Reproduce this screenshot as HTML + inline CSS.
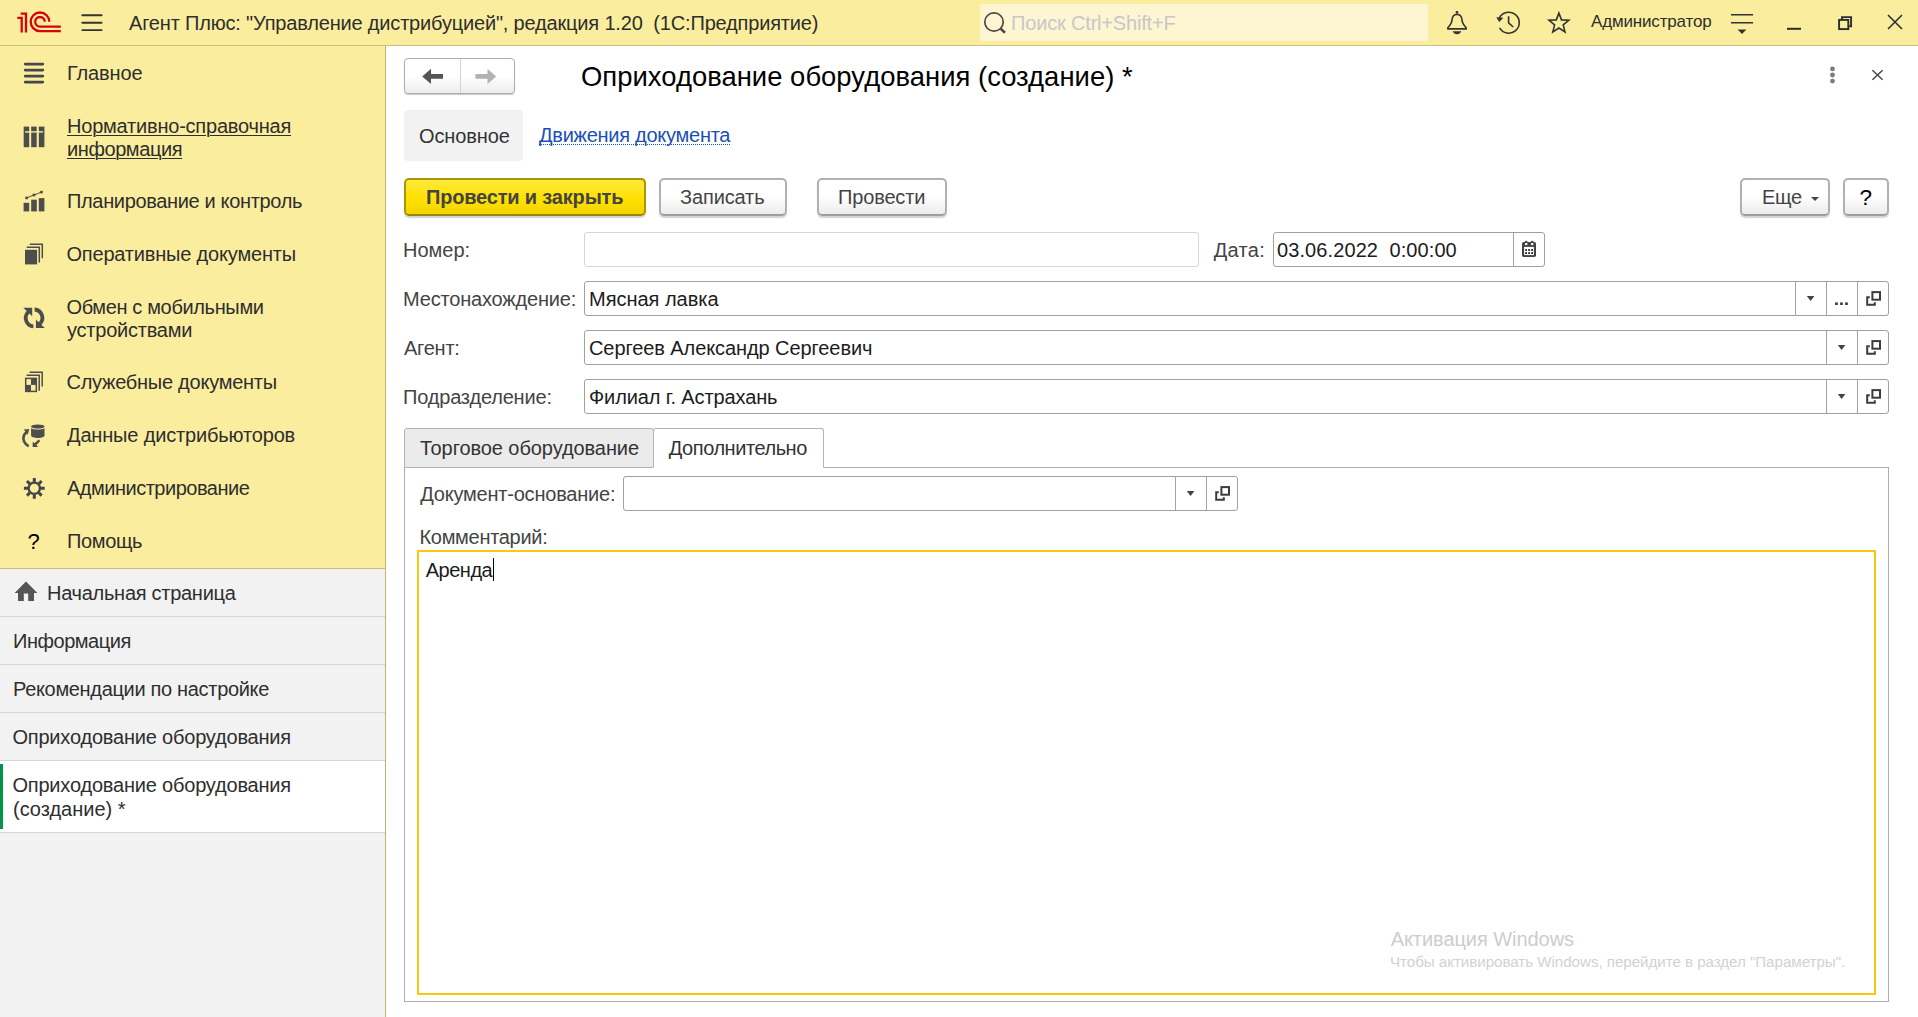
<!DOCTYPE html>
<html lang="ru">
<head>
<meta charset="utf-8">
<title>Оприходование оборудования (создание) *</title>
<style>
*{box-sizing:border-box;margin:0;padding:0}
html,body{width:1918px;height:1017px;overflow:hidden;background:#fff}
body{font-family:"Liberation Sans",sans-serif;font-size:20px;color:#333;position:relative}
.t{position:absolute;white-space:pre;line-height:24px;height:24px}
svg{position:absolute;overflow:visible}

/* ---------- top bar ---------- */
#topbar{position:absolute;left:0;top:0;width:1918px;height:46px;background:#fbed9e;border-bottom:1px solid #cbbf79}
#apptitle{left:129px;top:11px;font-size:20px;color:#2e2e2e}
#search{position:absolute;left:980px;top:4px;width:448px;height:37px;background:#fef6d3;border-radius:3px}
#srch{left:1013px;top:11px;font-size:20px;color:#c7c7c7}
#user{left:1591px;top:10px;font-size:17px;color:#2e2e2e}

/* ---------- sidebar ---------- */
#sections{position:absolute;left:0;top:46px;width:385px;height:522px;background:#fbed9e}
#sideborder{position:absolute;left:385px;top:46px;width:1px;height:971px;background:#c0b366}
#sectsep{position:absolute;left:0;top:568px;width:385px;height:1px;background:#cbbf79}
#opened{position:absolute;left:0;top:569px;width:385px;height:448px;background:#f2f2f2}
.sec{left:67px;font-size:20px;line-height:23px;height:23px;color:#2e2e2e}
.sec.u{text-decoration:underline;text-decoration-thickness:1px;text-underline-offset:2px}
.row{position:absolute;left:0;width:385px;height:48px;border-bottom:1px solid #d6d6d6}
.row.active{background:#fff;height:72px}
.row.active:before{content:"";position:absolute;left:0;top:3px;width:3px;height:65px;background:#009646}
.rt{left:13px;font-size:20px;color:#2e2e2e}

/* ---------- content ---------- */
#doctitle{left:581px;top:62px;font-size:27.4px;line-height:30px;height:30px;color:#000}
#navbtn{position:absolute;left:404px;top:58px;width:111px;height:36px;border:1px solid #adadad;border-radius:4px;background:linear-gradient(#ffffff,#ffffff 50%,#ededed);box-shadow:0 1px 1px rgba(0,0,0,.22)}
#navbtn i{position:absolute;left:55px;top:0;width:1px;height:34px;background:#d4d4d4}
#tabmain{position:absolute;left:404px;top:110px;width:119px;height:51px;background:#f2f2f2;border-radius:4px}
#tmain{left:419px;top:124px}
#tablink{left:539px;top:124px;color:#1850b8;border-bottom:1px dotted #1b55c0;line-height:22px;height:21px}

.btn{position:absolute;top:178px;height:38px;border:2px solid #b1b1b1;border-bottom-color:#9e9e9e;border-radius:5px;background:linear-gradient(#ffffff,#ffffff 45%,#ececec);box-shadow:0 2px 1px rgba(0,0,0,.17)}
.btn.def{border:2px solid #ab9500;border-bottom-color:#9c8700;background:linear-gradient(#ffe93b,#ffe100 55%,#f2d500)}
.bt{top:185px;color:#444}
#b1{font-weight:700;color:#444}

.lbl{color:#444}
.inp{position:absolute;height:35px;border:1px solid #a0a0a0;border-radius:3px;background:#fff}
.inp.dis{border-color:#d6d6d6}
.inp .d{position:absolute;top:0;width:1px;height:33px;background:#a3a3a3}
.val{color:#1c1c1c}

/* ---------- pages ---------- */
#panel{position:absolute;left:404px;top:467px;width:1485px;height:535px;border:1px solid #adadad;background:#fff}
.ptab{position:absolute;top:428px;height:40px;border:1px solid #b3b3b3;border-radius:3px 3px 0 0}
.ptab.off{background:#ebebeb}
.ptab.on{background:#fff;border-bottom-color:#fff}
.pt{top:436px;color:#333}
#memo{position:absolute;left:417px;top:550px;width:1459px;height:445px;border:2px solid #f9c70f;background:#fff}
#caret{position:absolute;left:493px;top:558px;width:1px;height:23px;background:#000}
.wm{position:absolute;white-space:nowrap;color:#c3c3c3}
/*LS-START*/
#apptitle{margin-left:0.00px;letter-spacing:-0.177px}
#srch{margin-left:-1.92px;letter-spacing:-0.180px}
#user{margin-left:0.00px;letter-spacing:-0.165px}
#s1{margin-left:0.00px;letter-spacing:-0.150px}
#s2a{margin-left:0.00px;letter-spacing:-0.212px}
#s2b{margin-left:0.00px;letter-spacing:-0.410px}
#s3{margin-left:0.00px;letter-spacing:-0.344px}
#s4{margin-left:-0.56px;letter-spacing:-0.184px}
#s5a{margin-left:-0.56px;letter-spacing:-0.355px}
#s5b{margin-left:0.00px;letter-spacing:-0.229px}
#s6{margin-left:-0.56px;letter-spacing:-0.250px}
#s7{margin-left:0.00px;letter-spacing:-0.162px}
#s8{margin-left:0.00px;letter-spacing:-0.495px}
#s9{margin-left:0.00px;letter-spacing:-0.360px}
#r1{margin-left:0.00px;letter-spacing:-0.275px}
#r2{margin-left:0.00px;letter-spacing:-0.460px}
#r3{margin-left:0.00px;letter-spacing:-0.323px}
#r4{margin-left:-0.56px;letter-spacing:-0.198px}
#r5a{margin-left:-0.56px;letter-spacing:-0.198px}
#r5b{margin-left:0.00px;letter-spacing:-0.016px}
#doctitle{margin-left:0.00px;letter-spacing:0.033px}
#tmain{margin-left:0.00px;letter-spacing:-0.096px}
#tablink{margin-left:0.00px;letter-spacing:-0.265px}
#b1{margin-left:0.00px;letter-spacing:-0.180px}
#b2{margin-left:0.00px;letter-spacing:-0.129px}
#b3{margin-left:0.00px;letter-spacing:-0.154px}
#b4{margin-left:0.00px;letter-spacing:-0.315px}
#l1{margin-left:0.00px;letter-spacing:0.000px}
#l2{margin-left:0.64px;letter-spacing:0.360px}
#l3{margin-left:0.00px;letter-spacing:-0.180px}
#l4{margin-left:1.04px;letter-spacing:-0.252px}
#l5{margin-left:0.00px;letter-spacing:-0.180px}
#v1{margin-left:0.00px;letter-spacing:0.100px}
#v2{margin-left:0.00px;letter-spacing:-0.016px}
#v3{margin-left:0.00px;letter-spacing:-0.083px}
#v4{margin-left:0.00px;letter-spacing:-0.120px}
#p1{margin-left:0.00px;letter-spacing:-0.081px}
#p2{margin-left:0.80px;letter-spacing:-0.450px}
#l6{margin-left:1.28px;letter-spacing:-0.215px}
#l7{margin-left:0.48px;letter-spacing:-0.295px}
#v5{margin-left:0.64px;letter-spacing:-0.468px}
#w1{margin-left:0.64px;letter-spacing:-0.056px}
#w2{margin-left:0.00px;letter-spacing:-0.062px}
/*LS-END*/
</style>
</head>
<body>

<!-- TOP BAR -->
<div id="topbar"></div>
<div id="apptitle" class="t">Агент Плюс: "Управление дистрибуцией", редакция 1.20  (1С:Предприятие)</div>
<div id="search"></div>
<div id="srch" class="t">Поиск Ctrl+Shift+F</div>
<div id="user" class="t">Администратор</div>

<!-- SIDEBAR -->
<div id="sections"></div>
<div id="sectsep"></div>
<div id="opened"></div>
<div id="sideborder"></div>

<div id="s1" class="t sec" style="top:62px">Главное</div>
<div id="s2a" class="t sec u" style="top:115px">Нормативно-справочная</div>
<div id="s2b" class="t sec u" style="top:138px">информация</div>
<div id="s3" class="t sec" style="top:190px">Планирование и контроль</div>
<div id="s4" class="t sec" style="top:243px">Оперативные документы</div>
<div id="s5a" class="t sec" style="top:296px">Обмен с мобильными</div>
<div id="s5b" class="t sec" style="top:319px">устройствами</div>
<div id="s6" class="t sec" style="top:371px">Служебные документы</div>
<div id="s7" class="t sec" style="top:424px">Данные дистрибьюторов</div>
<div id="s8" class="t sec" style="top:477px">Администрирование</div>
<div id="s9" class="t sec" style="top:530px">Помощь</div>
<div id="sq" class="t" style="left:27.6px;top:530px;font-size:22px;color:#000">?</div>

<div class="row" style="top:569px"></div>
<div class="row" style="top:617px"></div>
<div class="row" style="top:665px"></div>
<div class="row" style="top:713px"></div>
<div class="row active" style="top:761px"></div>
<div id="r1" class="t rt" style="left:47px;top:581px">Начальная страница</div>
<div id="r2" class="t rt" style="top:629px">Информация</div>
<div id="r3" class="t rt" style="top:677px">Рекомендации по настройке</div>
<div id="r4" class="t rt" style="top:725px">Оприходование оборудования</div>
<div id="r5a" class="t rt" style="top:773px">Оприходование оборудования</div>
<div id="r5b" class="t rt" style="top:797px">(создание) *</div>

<!-- CONTENT HEADER -->
<div id="navbtn"><i></i></div>
<div id="doctitle" class="t">Оприходование оборудования (создание) *</div>
<div id="tabmain"></div>
<div id="tmain" class="t">Основное</div>
<div id="tablink" class="t">Движения документа</div>

<!-- COMMAND BAR -->
<div class="btn def" style="left:404px;width:242px"></div>
<div class="btn" style="left:659px;width:128px"></div>
<div class="btn" style="left:817px;width:130px"></div>
<div class="btn" style="left:1740px;width:90px"></div>
<div class="btn" style="left:1843px;width:46px"></div>
<div id="b1" class="t bt" style="left:426px">Провести и закрыть</div>
<div id="b2" class="t bt" style="left:680px">Записать</div>
<div id="b3" class="t bt" style="left:838px">Провести</div>
<div id="b4" class="t bt" style="left:1762px">Еще</div>
<div id="b5" class="t bt" style="left:1859.6px;top:185.6px;font-size:22.5px;color:#000">?</div>

<!-- FIELDS -->
<div id="l1" class="t lbl" style="left:403px;top:238px">Номер:</div>
<div class="inp dis" style="left:584px;top:232px;width:615px"></div>
<div id="l2" class="t lbl" style="left:1213px;top:238px">Дата:</div>
<div class="inp" style="left:1273px;top:232px;width:272px"><div class="d" style="left:239px"></div></div>
<div id="v1" class="t val" style="left:1277px;top:238px">03.06.2022  0:00:00</div>

<div id="l3" class="t lbl" style="left:403px;top:287px">Местонахождение:</div>
<div class="inp" style="left:584px;top:281px;width:1305px"><div class="d" style="left:1210px"></div><div class="d" style="left:1241px"></div><div class="d" style="left:1272px"></div></div>
<div id="v2" class="t val" style="left:589px;top:287px">Мясная лавка</div>

<div id="l4" class="t lbl" style="left:403px;top:336px">Агент:</div>
<div class="inp" style="left:584px;top:330px;width:1305px"><div class="d" style="left:1241px"></div><div class="d" style="left:1272px"></div></div>
<div id="v3" class="t val" style="left:589px;top:336px">Сергеев Александр Сергеевич</div>

<div id="l5" class="t lbl" style="left:403px;top:385px">Подразделение:</div>
<div class="inp" style="left:584px;top:379px;width:1305px"><div class="d" style="left:1241px"></div><div class="d" style="left:1272px"></div></div>
<div id="v4" class="t val" style="left:589px;top:385px">Филиал г. Астрахань</div>

<!-- PAGES -->
<div id="panel"></div>
<div class="ptab off" style="left:404px;width:250px"></div>
<div class="ptab on" style="left:653px;width:171px"></div>
<div id="p1" class="t pt" style="left:420px">Торговое оборудование</div>
<div id="p2" class="t pt" style="left:668px">Дополнительно</div>

<div id="l6" class="t lbl" style="left:419px;top:482px">Документ-основание:</div>
<div class="inp" style="left:623px;top:476px;width:615px"><div class="d" style="left:551px"></div><div class="d" style="left:582px"></div></div>
<div id="l7" class="t lbl" style="left:419px;top:525px">Комментарий:</div>
<div id="memo"></div>
<div id="v5" class="t val" style="left:425px;top:558px">Аренда</div>
<div id="caret"></div>

<div id="w1" class="wm" style="left:1390px;top:927px;font-size:20px;line-height:24px;color:#cdcdcd">Активация Windows</div>
<div id="w2" class="wm" style="left:1390px;top:952px;font-size:15.2px;line-height:20px;color:#d2d2d2">Чтобы активировать Windows, перейдите в раздел "Параметры".</div>

<!-- ICON OVERLAY (page coordinates) -->
<svg id="icons" width="1918" height="1017" viewBox="0 0 1918 1017" style="left:0;top:0;pointer-events:none">
<!-- 1C logo -->
<g fill="none" stroke="#d8000f" stroke-width="2.3">
<path d="M17.3 17.9H21.7V32.4"/>
<path d="M20.7 13.7H26V32.4"/>
<path d="M49.3 21.8A9.3 9.3 0 1 0 40 31.1H60.8"/>
<path d="M44.8 21.8A4.8 4.8 0 1 0 40 26.6H60.8"/>
</g>
<!-- hamburger -->
<g stroke="#333" stroke-width="1.9" stroke-linecap="round"><path d="M82.3 15.2H101.6M82.3 22.7H101.6M82.3 30.1H101.6"/></g>
<!-- search -->
<g fill="none" stroke="#4a4a44" stroke-width="1.7"><circle cx="994" cy="22" r="9.2"/><path d="M1000.6 28.6L1005 32.8" stroke-width="2.6"/></g>
<!-- bell -->
<path d="M1457 14.5C1454 14.5 1452.3 16.6 1452.1 19.5C1451.9 23 1450.6 24.8 1447.8 27.8V28.9H1466.2V27.8C1463.4 24.8 1462.1 23 1461.9 19.5C1461.7 16.6 1460 14.5 1457 14.5Z" fill="none" stroke="#333" stroke-width="1.6" stroke-linejoin="round"/>
<circle cx="1457" cy="12.4" r="1.4" fill="#333"/>
<path d="M1452.7 31.2H1461.3C1460.5 33.2 1459 34.2 1457 34.2C1455 34.2 1453.5 33.2 1452.7 31.2Z" fill="#333"/>
<!-- history -->
<g fill="none" stroke="#333" stroke-width="1.6">
<path d="M1499.3 18.1A10.5 10.5 0 1 1 1499.6 27.9"/>
<path d="M1508.6 16.2V22.8L1513.2 27"/>
</g>
<path d="M1496.2 17.3L1503.4 17.7L1499.3 22Z" fill="#333"/>
<!-- star -->
<path d="M1558.9 13.1 L1561.5 19.9 L1568.8 20.3 L1563.2 24.9 L1565.0 31.9 L1558.9 28.0 L1552.8 31.9 L1554.6 24.9 L1549.0 20.3 L1556.3 19.9Z" fill="none" stroke="#333" stroke-width="1.6" stroke-linejoin="miter"/>
<!-- filter menu -->
<g stroke="#333" stroke-width="1.6"><path d="M1731 14.8H1753M1731 22.8H1753"/></g>
<path d="M1737.6 29.4H1746.4L1742 34Z" fill="#333"/>
<!-- window controls -->
<path d="M1787 28.8H1801" stroke="#2b2b33" stroke-width="2"/>
<g fill="none" stroke="#2b2b33" stroke-width="1.9"><path d="M1842 19V17.1H1851.1V26.2H1849.2"/><rect x="1839.1" y="19.9" width="9.2" height="9.2"/></g>
<path d="M1888 15L1902 29M1902 15L1888 29" stroke="#2b2b33" stroke-width="1.5"/>

<!-- form close / more -->
<g fill="#7b7b7b"><circle cx="1832.5" cy="68.9" r="2.4"/><circle cx="1832.5" cy="75" r="2.4"/><circle cx="1832.5" cy="81.1" r="2.4"/></g>
<path d="M1872.4 70.2L1882.6 79.8M1882.6 70.2L1872.4 79.8" stroke="#484848" stroke-width="1.5"/>

<!-- nav arrows -->
<path d="M422.2 76.4L431 68.7V74H443V78.8H431V84.1Z" fill="#555"/>
<path d="M496.2 76.4L487.5 68.7V74H475.4V78.8H487.5V84.1Z" fill="#b2b2b2"/>

<!-- SIDEBAR ICONS -->
<g stroke="#45474c" stroke-width="2.8" stroke-linecap="round"><path d="M25.2 64.1H42.8M25.2 70.1H42.8M25.2 76.1H42.8M25.2 82.1H42.8"/></g>
<g fill="#4d4d4d">
<rect x="23.7" y="126.6" width="5.5" height="20.6"/><rect x="31.2" y="126.6" width="5.5" height="20.6"/><rect x="38.8" y="126.6" width="5.6" height="20.6"/>
</g>
<rect x="25" y="131.2" width="18" height="1.4" fill="#fbed9e"/>
<!-- planning -->
<g fill="#4d4d4d">
<rect x="23.6" y="202.8" width="5.6" height="8.6"/><rect x="31.2" y="199.7" width="5.6" height="11.7"/><rect x="38.8" y="198.1" width="5.6" height="13.3"/>
<rect x="25.3" y="196.6" width="2.6" height="2.6"/><rect x="32.7" y="193.7" width="2.6" height="2.6"/><rect x="40.2" y="190.8" width="2.6" height="2.6"/>
</g>
<path d="M26.6 197.9L34 195L41.5 192.1" stroke="#4d4d4d" stroke-width="1" fill="none"/>
<!-- operative docs -->
<rect x="25" y="249.8" width="12.1" height="14.6" fill="#4d4d4d"/>
<g fill="none" stroke="#4d4d4d" stroke-width="1.5"><path d="M26.8 247.2H39.3V262.6"/><path d="M29.8 244.2H42.3V258.2"/></g>
<!-- exchange -->
<g fill="#4d4d4d">
<path d="M23.35 307.8H32.2V316.2L29.4 313.5A6.5 6.5 0 0 0 33.4 324.4V328.2A10.3 10.3 0 0 1 26.6 310.9Z"/>
<path d="M44.75 328H35.9V319.6L38.7 322.3A6.5 6.5 0 0 0 34.6 311.4V307.6A10.3 10.3 0 0 1 41.5 324.9Z"/>
</g>
<!-- service docs -->
<g fill="none" stroke="#4d4d4d" stroke-width="1.5"><path d="M26.6 375.3H39.2V390.8"/><path d="M29.6 372.3H42.2V386.6"/><rect x="25.7" y="378.4" width="10.6" height="13"/></g>
<g fill="#4d4d4d"><rect x="31" y="378.4" width="5.3" height="6.5"/><rect x="25.7" y="384.9" width="5.3" height="6.5"/></g>
<!-- distributors data -->
<g fill="#4d4d4d">
<ellipse cx="37.8" cy="426.5" rx="6.8" ry="1.95"/>
<path d="M31.1 427.4C31.1 430.3 44.5 430.3 44.5 427.4V435.4C44.5 438.7 31.1 438.7 31.1 435.4Z"/>
<path d="M32.6 446.9L32.8 441.6L34.6 443.3L38.6 439.4L40.3 441.1L36.4 445L38.2 446.9Z"/>
<path d="M23.8 429.4L29.3 429.1L27.7 434.7Z"/>
</g>
<path d="M26.4 432.2C23.6 434.7 22.9 438.6 24.1 441.6C25 443.8 26.5 445.3 28.7 446.2" fill="none" stroke="#4d4d4d" stroke-width="2.6"/>
<!-- gear -->
<circle cx="34.3" cy="488.3" r="5.65" fill="none" stroke="#43454b" stroke-width="2.3"/>
<path d="M40.60 488.30L44.70 488.30M38.75 492.75L41.65 495.65M34.30 494.60L34.30 498.70M29.85 492.75L26.95 495.65M28.00 488.30L23.90 488.30M29.85 483.85L26.95 480.95M34.30 482.00L34.30 477.90M38.75 483.85L41.65 480.95" stroke="#43454b" stroke-width="3" fill="none"/>
<!-- home -->
<path d="M26 581.6L37.4 593H34V601H28.2V593.4H23.8V601H18V593H14.6Z" fill="#555"/>

<!-- FIELD ICONS -->
<g fill="none" stroke="#3c3c3c" stroke-width="2"><rect x="1872.4" y="292.1" width="7.6" height="7.6"/><path d="M1869.8 297.3H1867.2V304.7H1874.8V302.3"/></g>
<g fill="none" stroke="#3c3c3c" stroke-width="2"><rect x="1872.4" y="341.1" width="7.6" height="7.6"/><path d="M1869.8 346.3H1867.2V353.7H1874.8V351.3"/></g>
<g fill="none" stroke="#3c3c3c" stroke-width="2"><rect x="1872.4" y="390.1" width="7.6" height="7.6"/><path d="M1869.8 395.3H1867.2V402.7H1874.8V400.3"/></g>
<path d="M1806.8 296.1H1814.4L1810.6 300.9Z" fill="#444"/>
<path d="M1837.8 345.1H1845.4L1841.6 349.9Z" fill="#444"/>
<path d="M1837.8 394.1H1845.4L1841.6 398.9Z" fill="#444"/>
<g fill="#3c3c3c"><rect x="1835.1" y="302.4" width="2.7" height="2.6"/><rect x="1840.1" y="302.4" width="2.7" height="2.6"/><rect x="1845.1" y="302.4" width="2.7" height="2.6"/></g>
<path d="M1186.8 491.1H1194.4L1190.6 495.9Z" fill="#444"/>
<g fill="none" stroke="#3c3c3c" stroke-width="2"><rect x="1221.4" y="487.1" width="7.6" height="7.6"/><path d="M1218.8 492.3H1216.2V499.7H1223.8V497.3"/></g>
<g>
<rect x="1522" y="241.9" width="14" height="15" rx="1.6" fill="#444"/>
<rect x="1524.1" y="246.9" width="9.8" height="8.2" fill="#fff"/>
<rect x="1524.9" y="240.8" width="2.6" height="4.4" rx="1.2" fill="#444"/><rect x="1530.9" y="240.8" width="2.6" height="4.4" rx="1.2" fill="#444"/>
<rect x="1525.1" y="243" width="2.2" height="2.1" fill="#fff"/><rect x="1531.1" y="243" width="2.2" height="2.1" fill="#fff"/>
<g fill="#222"><rect x="1525.2" y="249.1" width="1.8" height="1.8"/><rect x="1528.2" y="249.1" width="1.8" height="1.8"/><rect x="1531.2" y="249.1" width="1.8" height="1.8"/>
<rect x="1525.2" y="252.2" width="1.8" height="1.8"/><rect x="1528.2" y="252.2" width="1.8" height="1.8"/><rect x="1531.2" y="252.2" width="1.8" height="1.8"/></g>
</g>
<path d="M1811.0 196.9H1819.0L1815.0 201.1Z" fill="#444"/>
</svg>
</body>
</html>
